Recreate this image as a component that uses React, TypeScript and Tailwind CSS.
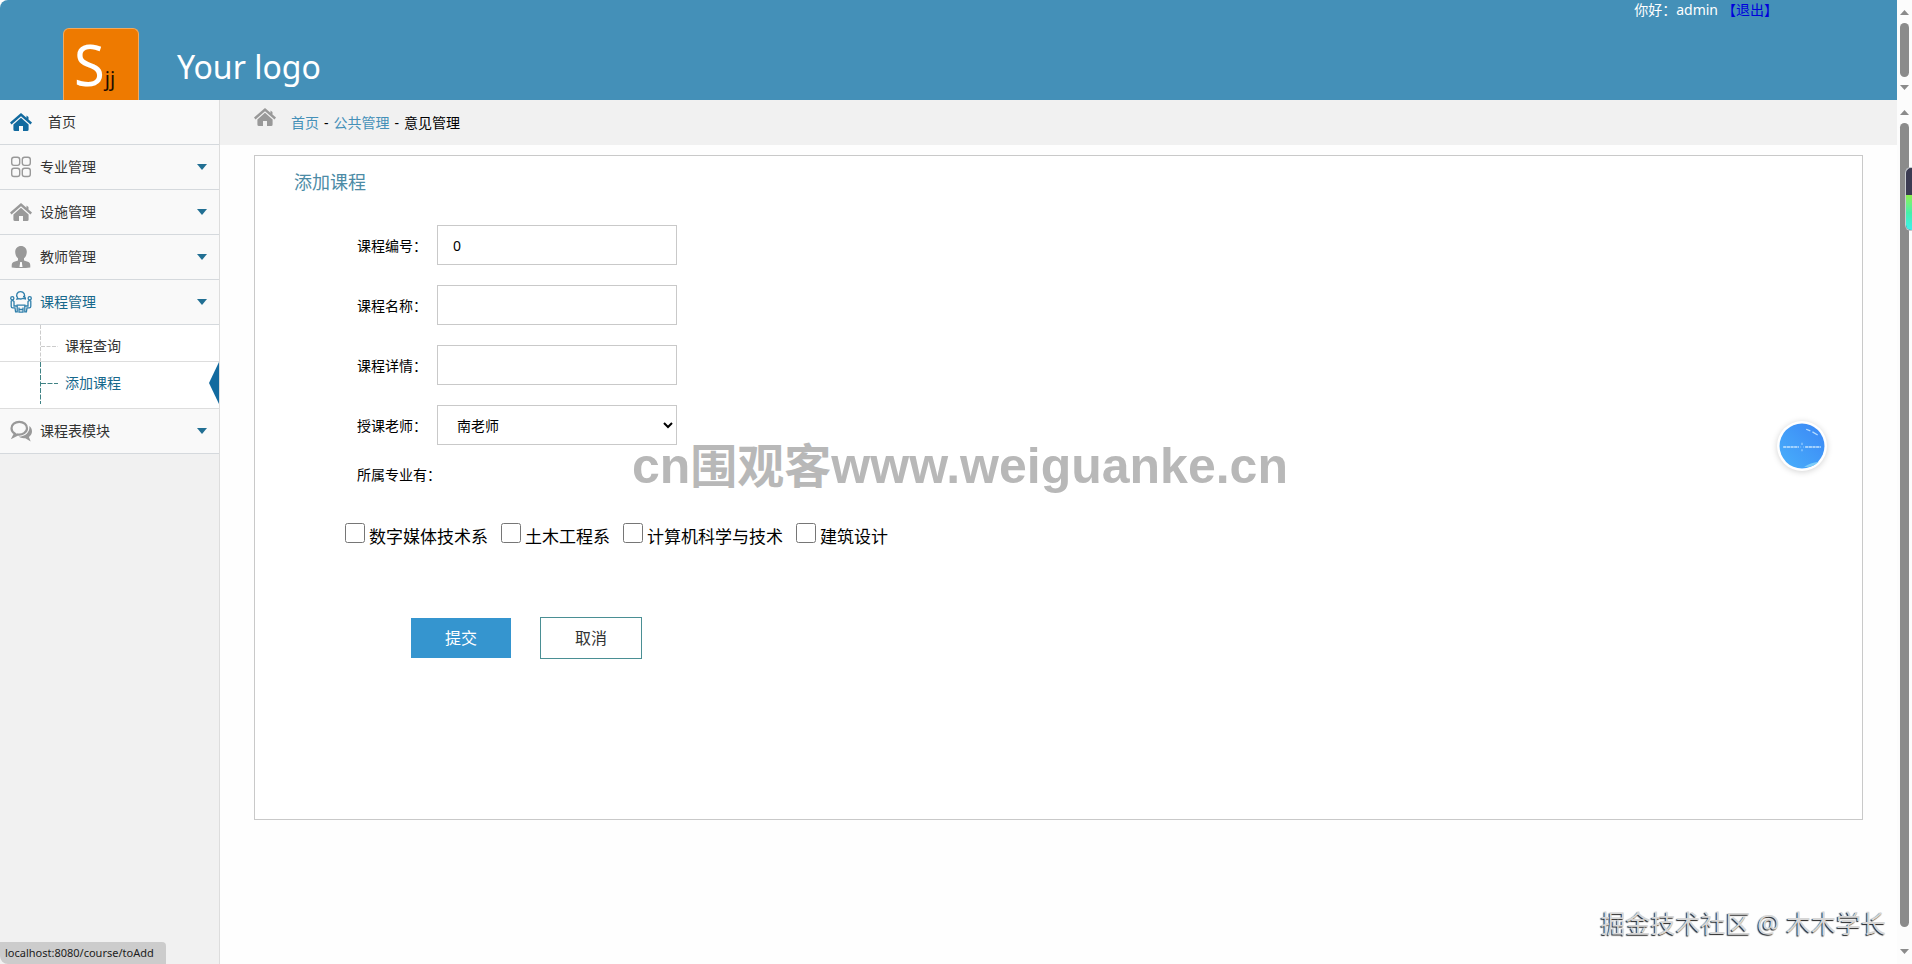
import { useState } from "react";
import type { ReactNode } from "react";

function HomeIcon({ className }: { className: string }) {
  return (
    <svg viewBox="0 0 22 18" className={className} aria-hidden="true">
      <path d="M11 0 0 9.600l1.500 1.800L11 3.200l9.500 8.200L22 9.600 18.500 6.500V4l-2-1.500v2.300z" fill="currentColor" />
      <path d="M11 4.800 3.400 11.400V16.500q0 1.500 1.500 1.500H9v-5h4v5h4.100q1.500 0 1.500-1.500V11.400z" fill="currentColor" />
    </svg>
  );
}

function GridIcon() {
  return (
    <svg viewBox="0 0 22 22" className="size-[22px] text-[#999999]" fill="none" stroke="currentColor" strokeWidth="1.4" aria-hidden="true">
      <rect x="1.700" y="1.200" width="8" height="8.200" rx="2.300" />
      <rect x="12.300" y="1.200" width="8" height="8.200" rx="2.300" />
      <rect x="1.700" y="12.300" width="8" height="8.200" rx="2.300" />
      <rect x="12.300" y="12.300" width="8" height="8.200" rx="2.300" />
    </svg>
  );
}

function PersonIcon() {
  return (
    <svg viewBox="0 0 22 22" className="size-[22px] text-[#999999]" aria-hidden="true">
      <path d="M11 0C7.600 0 5.200 2.500 5.200 6c0 2.600 1.100 4.900 2.800 6.200v2.200L3.500 16C2 16.700 1.700 18 1.700 20v1.500Q6 22 11 22t9.300-.5V20c0-2-.3-3.300-1.800-4L14 14.400v-2.200c1.700-1.300 2.800-3.600 2.800-6.200 0-3.500-2.400-6-5.800-6z" fill="currentColor" />
      <path d="M10.200 16h1.600l.7 5h-3z" fill="#ffffff" />
    </svg>
  );
}

function MeetingIcon() {
  return (
    <svg viewBox="0 0 22 22" className="size-[22px] text-[#2f7fab]" fill="none" stroke="currentColor" strokeWidth="1.3" aria-hidden="true">
      <path d="M12.500 7.700C11.500 8 10 8.100 8.900 7.600L7 8l.5-1.400C5.500 4 7.300.7 10.500.7c3.400 0 5.200 3.300 3.300 5.800" />
      <path d="M13 5.500c2 .2 2.600 1.300 2.400 2.500l-1.200-.4c-1 .2-1.800 0-2.200-.6" />
      <circle cx="2.300" cy="7.200" r="1.600" />
      <circle cx="19.700" cy="7.200" r="1.600" />
      <path d="M1.200 10v5.200c0 1 .5 1.600 1.500 1.600H5l.6 4h1.600V15H4V10.500Q3.500 9.600 2.400 9.600T1.200 10z" />
      <path d="M20.800 10v5.200c0 1-.5 1.600-1.500 1.600H17l-.6 4h-1.600V15H18v-4.500q.5-.9 1.600-.9t1.200.4z" />
      <path d="M6.500 14.200h9M9 16.500v4.700h4v-4.700M9 18.500h4" />
    </svg>
  );
}

function ChatIcon() {
  return (
    <svg viewBox="0 0 22 22" className="size-[22px] text-[#999999]" aria-hidden="true">
      <path d="M9.300 1.800c-4.300 0-7.800 2.800-7.800 6.400 0 2.300 1.400 4.300 3.500 5.400l-1.600 3.100 4.300-2.200c4.800.7 9.300-2.300 9.300-6.300 0-3.600-3.400-6.400-7.700-6.400z" fill="none" stroke="currentColor" strokeWidth="2.200" />
      <path d="M19.300 6c1.700 1.300 2.700 3.200 2.700 5.300 0 2.400-1.200 4.400-3.100 5.700l1.800 4.600-5.400-3.400c-2.500.4-4.900-.2-6.600-1.600 6.400 0 11.600-4.300 10.600-10.600z" fill="currentColor" />
    </svg>
  );
}

function Caret() {
  return <svg viewBox="0 0 10 6" className="mr-3 h-[6px] w-[10px] text-[#216f93]" aria-hidden="true"><path d="M0 0h10L5 6z" fill="currentColor" /></svg>;
}

function MenuItem({ icon, label, active = false }: { icon: ReactNode; label: string; active?: boolean }) {
  return (
    <li>
      <button
        type="button"
        className={`flex h-[45px] w-full items-center gap-2 border-b border-[#d5d9dd] bg-[#f9f9f9] pl-[10px] text-left text-sm ${active ? "text-[#17688c]" : "text-[#333333]"}`}
      >
        {icon}
        <span className="flex-1">{label}</span>
        <Caret />
      </button>
    </li>
  );
}

function Scrollbar({ thumb = "" }: { thumb?: string }) {
  return (
    <div className="flex w-[15px] shrink-0 flex-col items-center gap-2 bg-[#fcfcfc] py-[10px] text-[#8b8b8b]" aria-hidden="true">
      <svg viewBox="0 0 9 5" className="h-[5px] w-[9px]"><path d="M0 5h9L4.500 0z" fill="currentColor" /></svg>
      <div className={`w-[9px] flex-1 rounded-full bg-[#8b8b8b] ${thumb}`} />
      <svg viewBox="0 0 9 5" className="h-[5px] w-[9px]"><path d="M0 0h9L4.500 5z" fill="currentColor" /></svg>
    </div>
  );
}

function Header() {
  return (
    <header className="flex h-[100px] shrink-0">
      <div className="flex flex-1 justify-between rounded-tl-lg bg-[#4490b8]">
        <div className="flex items-end gap-[38px] pl-[63px]">
          <div className="flex h-[72px] w-[76px] items-baseline rounded-t-md border border-b-0 border-[#f4a95c] bg-[#ee7a00] pl-[10px] text-white">
            <span className="text-[56px] leading-[70px]">S</span>
            <span className="text-xl text-[#1c0d00]">jj</span>
          </div>
          <span className="pb-[11px] text-[32px] leading-[44px] text-white">Your logo</span>
        </div>
        <p className="pr-[119px] text-sm leading-5 text-white">
          你好：admin<a href="#logout" className="ml-1 text-[#0000dd]">【退出】</a>
        </p>
      </div>
      <Scrollbar />
    </header>
  );
}

function Sidebar() {
  return (
    <nav className="w-[220px] shrink-0 border-r border-[#dddddd] bg-[#f1f1f1]">
      <ul>
        <li>
          <a href="#home" className="flex h-[45px] items-center gap-4 border-b border-[#d5d9dd] bg-[#f9f9f9] pl-[10px] text-sm text-[#333333]">
            <HomeIcon className="h-[18px] w-[22px] text-[#126a9f]" />
            首页
          </a>
        </li>
        <MenuItem icon={<GridIcon />} label="专业管理" />
        <MenuItem icon={<HomeIcon className="h-[18px] w-[22px] text-[#999999]" />} label="设施管理" />
        <MenuItem icon={<PersonIcon />} label="教师管理" />
        <MenuItem icon={<MeetingIcon />} label="课程管理" active />
        <li>
          <ul className="bg-white text-sm">
            <li className="border-b border-[#dddddd] pl-10">
              <a href="#query" className="flex h-[36px] text-[#333333]">
                <svg viewBox="0 0 18 36" className="mr-[7px] h-[36px] w-[18px]" fill="none" stroke="#cccccc" strokeDasharray="4 1.500" aria-hidden="true">
                  <path d="M.5 0v36M1 21.500h17" />
                </svg>
                <span className="pt-[11px]">课程查询</span>
              </a>
            </li>
            <li className="border-b border-[#dddddd] pl-10">
              <a href="#add" className="flex h-[46px] text-[#17688c]">
                <svg viewBox="0 0 18 42" className="mr-[7px] h-[42px] w-[18px]" fill="none" stroke="#3f8284" strokeDasharray="5 1.500" aria-hidden="true">
                  <path d="M.5 0v42M1 21.500h17" />
                </svg>
                <span className="flex-1 pt-[11px]">添加课程</span>
                <svg viewBox="0 0 10 42" className="h-[42px] w-[10px]" aria-hidden="true"><path d="M10 0v42L0 21z" fill="#126a9f" /></svg>
              </a>
            </li>
          </ul>
        </li>
        <MenuItem icon={<ChatIcon />} label="课程表模块" />
      </ul>
    </nav>
  );
}

const fieldBox = "h-10 w-60 rounded-none border border-[#c9c9c9] bg-white text-sm text-black outline-none";

function Field({ id, label, children }: { id: string; label: string; children: ReactNode }) {
  return (
    <div className="flex h-10 items-center">
      <label htmlFor={id} className="w-20 pt-[2px] text-sm text-black">{label}</label>
      {children}
    </div>
  );
}

function CourseForm() {
  const [code, setCode] = useState("0");
  return (
    <form className="min-h-[665px] border border-[#c9c9c9] bg-white" onSubmit={(e) => e.preventDefault()}>
      <h1 className="pt-3 pl-[39px] text-lg leading-7 text-[#4c8ba6]">添加课程</h1>
      <div className="flex flex-col gap-5 pt-[29px] pl-[102px]">
        <Field id="code" label="课程编号：">
          <input id="code" value={code} onChange={(e) => setCode(e.target.value)} className={`${fieldBox} px-[15px]`} />
        </Field>
        <Field id="name" label="课程名称：">
          <input id="name" className={`${fieldBox} px-[15px]`} />
        </Field>
        <Field id="detail" label="课程详情：">
          <input id="detail" className={`${fieldBox} px-[15px]`} />
        </Field>
        <Field id="teacher" label="授课老师：">
          <select id="teacher" className={`${fieldBox} pl-[15px]`}>
            <option>南老师</option>
          </select>
        </Field>
      </div>
      <fieldset>
        <legend className="pt-5 pl-[102px] text-sm leading-5 text-black">所属专业有：</legend>
        <div className="flex gap-[13px] pt-[38px] pl-[90px] text-[17px] leading-6 text-black">
          {["数字媒体技术系", "土木工程系", "计算机科学与技术", "建筑设计"].map((major) => (
            <label key={major} className="flex items-center gap-1">
              <input type="checkbox" className="mb-2 size-5" />
              {major}
            </label>
          ))}
        </div>
      </fieldset>
      <div className="flex items-center gap-[29px] pt-[66px] pl-[156px] text-base">
        <button type="submit" className="h-10 w-[100px] bg-[#3595cf] text-white">提交</button>
        <button type="button" className="h-[42px] w-[102px] border border-[#4a8f94] bg-white text-[#333333]">取消</button>
      </div>
    </form>
  );
}

function Overlays() {
  return (
    <>
      <div className="pointer-events-none absolute top-[432px] left-[632px] text-[50px] leading-[68px] font-bold whitespace-nowrap text-[#b8b8b8] [font-family:'Liberation_Sans','Noto_Sans_CJK_SC',sans-serif]">
        cn<span className="text-[47px]">围观客</span>www.weiguanke.cn
      </div>
      <div className="absolute top-[421px] right-[85px] size-[50px] rounded-full bg-white p-[2px] shadow-[0_1px_6px_rgba(0,0,0,0.18)]">
        <svg viewBox="0 0 44 44" className="size-full" aria-hidden="true">
          <defs>
            <linearGradient id="orb" x1="0" y1="1" x2="1" y2="0">
              <stop offset="0" stopColor="#48b0fb" />
              <stop offset="1" stopColor="#3b86f5" />
            </linearGradient>
          </defs>
          <circle cx="22" cy="22" r="21.500" fill="url(#orb)" />
          <path d="M4 23h15M25 23h15" stroke="#c4e3ff" strokeWidth="1.500" strokeDasharray="3 .5" />
          <path d="M22 19v2M22 25v2M20.500 23h.7M23 23h.7" stroke="#a8d6ff" />
          <path d="M26 6l4 1.500M32 8.500l5 3" stroke="#b5dcff" strokeWidth="1.200" />
          <path d="M24 42q6-4 14-5-6 6-14 5z" fill="#7cccf8" />
        </svg>
      </div>
      <div className="absolute top-[167px] right-0 h-16 w-[7px] overflow-hidden rounded-l-md border border-r-0 border-[#c8ccd0] bg-[#3b3b52]">
        <div className="mt-[27px] h-[35px] bg-linear-to-b from-[#8af04d] via-[#45f0a8] to-[#3ff0ee]" />
      </div>
      <div className="pointer-events-none absolute right-[26px] bottom-[23px] text-[25px] leading-9 whitespace-nowrap text-[#d6d6d6] [text-shadow:-1px_1px_1px_#222222]">
        掘金技术社区 @ 木木学长
      </div>
      <div className="absolute bottom-0 left-0 h-[22px] w-[166px] rounded-tr-sm rounded-bl-lg bg-[#cccccc] pl-[5px] text-[11px] leading-[22px] text-[#1c1c1c]">
        localhost:8080/course/toAdd
      </div>
    </>
  );
}

export default function App() {
  return (
    <div className="relative flex min-h-screen flex-col overflow-hidden bg-[#fefefe] [font-family:'Noto_Sans','Noto_Sans_CJK_SC',sans-serif]">
      <Header />
      <div className="flex flex-1">
        <Sidebar />
        <main className="min-w-0 flex-1">
          <div className="flex h-[45px] bg-[#f1f1f1] pl-[34px] text-sm">
            <HomeIcon className="mt-2 mr-[15px] h-[18px] w-[22px] text-[#999999]" />
            <p className="flex gap-[5px] pt-[13px] text-black">
              <a href="#home" className="text-[#4490b8]">首页</a>
              <span>-</span>
              <a href="#public" className="text-[#4490b8]">公共管理</a>
              <span>-</span>
              <span>意见管理</span>
            </p>
          </div>
          <div className="px-[34px] pt-[10px]">
            <CourseForm />
          </div>
        </main>
        <Scrollbar thumb="mb-[14px]" />
      </div>
      <Overlays />
    </div>
  );
}
